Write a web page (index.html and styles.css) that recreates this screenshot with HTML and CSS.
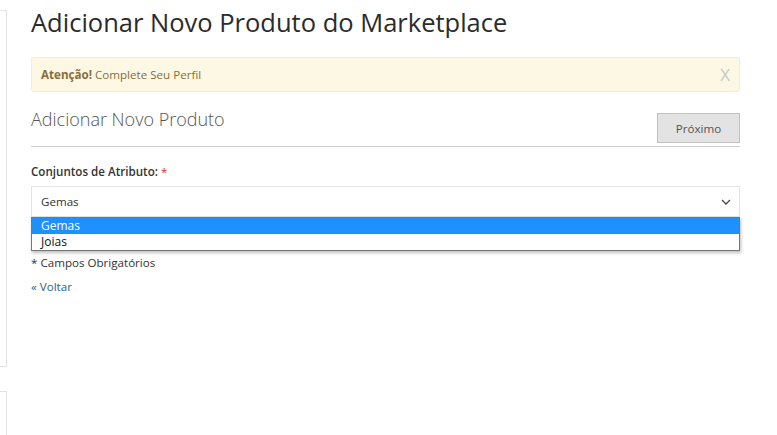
FILE: index.html
```html
<!DOCTYPE html>
<html lang="pt">
<head>
<meta charset="utf-8">
<title>Adicionar Novo Produto do Marketplace</title>
<link rel="stylesheet" href="styles.css">
</head>
<body>
<div class="page">
  <aside class="sidebar">
    <div class="side-box side-box-top"></div>
    <div class="side-box side-box-bottom"></div>
  </aside>
  <main class="main">
    <h1 class="page-title">Adicionar Novo Produto do Marketplace</h1>
    <div class="alert">
      <span><strong>Atenção!</strong> Complete Seu Perfil</span>
      <span class="alert-close">X</span>
    </div>
    <div class="section-head">
      <h2 class="section-title">Adicionar Novo Produto</h2>
      <button class="btn" type="button">Próximo</button>
    </div>
    <div class="field">
      <label class="field-label">Conjuntos de Atributo: <span class="req">*</span></label>
      <div class="select-wrap">
        <div class="select">
          <span>Gemas</span>
          <svg class="chev" width="10" height="6" viewBox="0 0 10 6"><path d="M1 1 L5 5 L9 1" fill="none" stroke="#444" stroke-width="1.3"/></svg>
        </div>
        <ul class="dropdown">
          <li class="opt opt-active">Gemas</li>
          <li class="opt">Joias</li>
        </ul>
      </div>
    </div>
    <p class="required-note">* Campos Obrigatórios</p>
    <a class="back" href="#">« Voltar</a>
  </main>
</div>
</body>
</html>
```
FILE: styles.css
```css
* { box-sizing: border-box; }
html, body { margin: 0; padding: 0; background: #fff; }
body {
  font-family: "Open Sans", "Liberation Sans", sans-serif;
  color: #333;
  font-size: 11.6px;
}
.page {
  display: flex;
  align-items: flex-start;
  width: 777px;
  height: 435px;
  overflow: hidden;
}
.sidebar {
  width: 7px;
  flex: 0 0 7px;
  padding-top: 10px;
  display: flex;
  flex-direction: column;
  gap: 24px;
}
.side-box {
  width: 7px;
  border: 1px solid #e3e3e3;
  border-left: none;
}
.side-box-top { height: 357px; }
.side-box-bottom { height: 60px; }
.main {
  width: 709px;
  margin-left: 24px;
}
.page-title {
  margin: 0;
  padding-top: 4px;
  font-size: 25.5px;
  line-height: 36px;
  font-weight: 400;
  color: #2b2b2b;
}
.alert {
  margin-top: 17px;
  height: 35px;
  background: #fcf8e3;
  border: 1px solid #faebcc;
  border-radius: 3px;
  color: #8a6d3b;
  display: flex;
  align-items: center;
  justify-content: space-between;
  padding: 0 9px 0 9px;
  font-size: 11.6px;
}
.alert strong { font-weight: 700; }
.alert-close {
  color: #c8c8c8;
  font-size: 17px;
  font-family: "Open Sans", sans-serif;
}
.section-head {
  margin-top: 14px;
  display: flex;
  justify-content: space-between;
  align-items: flex-start;
  border-bottom: 1px solid #cccccc;
  padding-bottom: 3px;
}
.section-title {
  margin: 0;
  font-size: 18px;
  font-weight: 300;
  color: #555;
  line-height: 26px;
}
.btn {
  margin-top: 7px;
  width: 83px;
  height: 30px;
  background: #e3e3e3;
  border: 1px solid #c2c2c2;
  color: #555;
  font-family: "Open Sans", sans-serif;
  font-size: 11.6px;
  padding: 0;
}
.field { margin-top: 16px; }
.field-label {
  display: block;
  font-weight: 600;
  font-size: 11.6px;
  line-height: 18px;
  color: #333;
}
.req { color: #e02b27; font-weight: 400; }
.select-wrap {
  margin-top: 5px;
  position: relative;
}
.select {
  height: 31px;
  border: 1px solid #e4e4e4;
  display: flex;
  align-items: center;
  justify-content: space-between;
  padding: 0 8px 0 9px;
  font-size: 11.6px;
  color: #333;
}
.dropdown {
  position: absolute;
  top: 31px;
  left: 0;
  right: 0;
  margin: 0;
  padding: 0;
  list-style: none;
  border: 1px solid #767676;
  background: #fff;
  box-shadow: 1px 2px 3px rgba(0,0,0,0.25);
}
.opt {
  height: 16px;
  line-height: 16px;
  padding-left: 9px;
  font-size: 12px;
  color: #111;
}
.opt-active {
  background: #1e90ff;
  color: #fff;
}
.required-note {
  margin: 37px 0 0 0;
  font-size: 11.6px;
  line-height: 18px;
  color: #333;
}
.back {
  display: inline-block;
  margin-top: 6px;
  font-size: 11.6px;
  line-height: 18px;
  color: #2b6584;
  text-decoration: none;
}
```
